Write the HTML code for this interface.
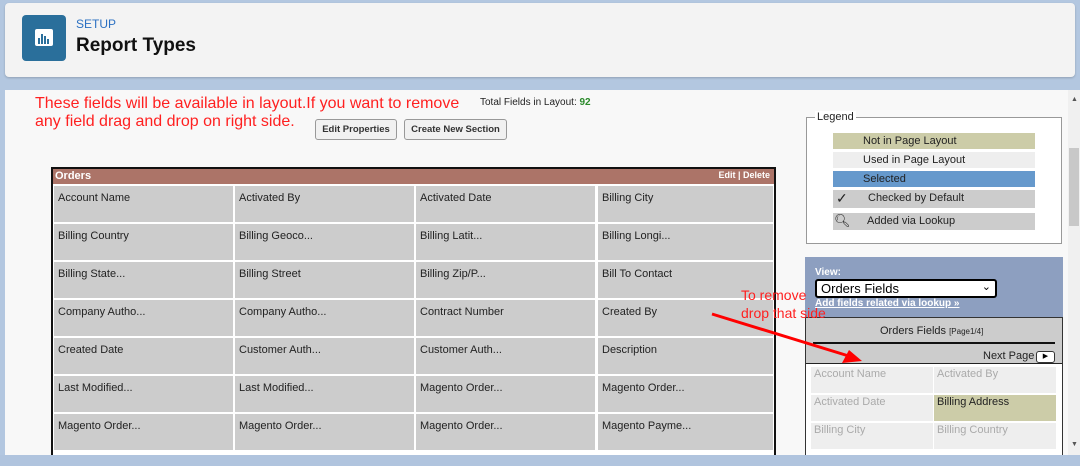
<!DOCTYPE html>
<html style="width:1080px;height:466px;overflow:hidden"><head><meta charset="utf-8"><style>
*{margin:0;padding:0;box-sizing:border-box}
body{width:1080px;height:466px;overflow:hidden;background:#b3c7e0;font-family:"Liberation Sans",Arial,sans-serif;position:relative}
.a{position:absolute}
.hdr{left:5px;top:3px;width:1070px;height:74px;background:#f3f3f3;border-radius:4px;box-shadow:0 1px 2px rgba(0,0,0,.2)}
.main{left:5px;top:90px;width:1075px;height:366px;background:#f8f8f8}
.cell{position:absolute;background:#cccccc;font-size:11px;color:#222;padding:6px 0 0 4px;height:36px}
.btn{position:absolute;top:119px;height:21px;border:1px solid #999;border-radius:3px;background:#f1f1f1;font-size:9.5px;font-weight:bold;color:#333;padding:4px 0 0;text-align:center;white-space:nowrap}
.lg{position:absolute;left:833px;width:202px;height:16px;font-size:11px;color:#222;padding:2px 0 0 30px}
.rc{position:absolute;background:#eeeeee;font-size:11px;color:#aaa;padding:1px 0 0 3px;height:26px;width:122px}
</style></head><body>
<div class="a hdr"></div>
<div class="a" style="left:22px;top:15px;width:44px;height:46px;background:#2a6f9b;border-radius:4px"></div>
<div class="a" style="left:35px;top:29px;width:18px;height:17px;background:#fff;border-radius:2px"></div>
<div class="a" style="left:38px;top:38px;width:2px;height:6px;background:#2a6f9b"></div>
<div class="a" style="left:41px;top:34px;width:2px;height:10px;background:#2a6f9b"></div>
<div class="a" style="left:44px;top:36px;width:2px;height:8px;background:#2a6f9b"></div>
<div class="a" style="left:47px;top:39px;width:2px;height:5px;background:#2a6f9b"></div>
<div class="a" style="left:76px;top:17px;font-size:12px;color:#2b70c2">SETUP</div>
<div class="a" style="left:76px;top:35px;font-size:19px;font-weight:bold;color:#111">Report Types</div>
<div class="a main"></div>
<div class="a" style="left:1068px;top:90px;width:12px;height:366px;background:#f0f0f0"></div>
<div class="a" style="left:1069px;top:148px;width:10px;height:78px;background:#c8c8c8"></div>
<div class="a" style="left:1071px;top:96px;font-size:7px;color:#555">▲</div>
<div class="a" style="left:1071px;top:441px;font-size:7px;color:#555">▼</div>
<div class="a" style="left:35px;top:95px;font-size:16px;color:#ff2020;line-height:18px;white-space:nowrap">These fields will be available in layout.If you want to remove<br>any field drag and drop on right side.</div>
<div class="a" style="left:480px;top:97px;font-size:10px;color:#222">Total Fields in Layout: <b style="color:#2a8a2a">92</b></div>
<div class="btn" style="left:315px;width:82px">Edit Properties</div>
<div class="btn" style="left:404px;width:103px">Create New Section</div>
<div class="a" style="left:51px;top:167px;width:725px;height:289px;border:2px solid #111;border-bottom:none;background:#fff;overflow:hidden"></div>
<div class="a" style="left:53px;top:169px;width:721px;height:15px;background:#ac7468;color:#fff;font-size:11px;font-weight:bold;padding:1px 0 0 2px">Orders<span style="position:absolute;right:4px;top:1px;font-size:9px">Edit | Delete</span></div>
<div id="g"></div>
<div class="a" style="left:806px;top:117px;width:256px;height:127px;border:1px solid #999;background:#fff"></div>
<div class="a" style="left:815px;top:111px;font-size:11px;background:#fff;padding:0 2px;color:#222">Legend</div>
<div class="lg" style="top:133px;background:#cccca8">Not in Page Layout</div>
<div class="lg" style="top:152px;background:#eeeeee">Used in Page Layout</div>
<div class="lg" style="top:171px;background:#6699cc">Selected</div>
<div class="lg" style="top:190px;height:18px;background:#cccccc;padding-left:35px">Checked by Default<span style="position:absolute;left:3px;top:0;font-size:14px">✓</span></div>
<div class="lg" style="top:213px;height:17px;background:#cccccc;padding-left:34px">Added via Lookup<span style="position:absolute;left:1px;top:0;font-size:13px">🔍︎</span></div>
<div class="a" style="left:805px;top:257px;width:258px;height:60px;background:#8d9fc0"></div>
<div class="a" style="left:815px;top:267px;font-size:10px;font-weight:bold;color:#fff">View:</div>
<div class="a" style="left:815px;top:279px;width:182px;height:19px;background:#fff;border:2px solid #000;border-radius:3px;font-size:13px;padding:0 0 0 4px">Orders Fields<span style="position:absolute;right:4px;top:-1px;font-size:11px">⌄</span></div>
<div class="a" style="left:815px;top:298px;font-size:10px;font-weight:bold;color:#fff;text-decoration:underline">Add fields related via lookup »</div>
<div class="a" style="left:805px;top:317px;width:258px;height:149px;border:1px solid #333;background:#fff"></div>
<div class="a" style="left:806px;top:318px;width:256px;height:46px;background:#cccccc;border-bottom:1px solid #222"></div>
<div class="a" style="left:880px;top:325px;font-size:11px;color:#222">Orders Fields <span style="font-size:8px">[Page1/4]</span></div>
<div class="a" style="left:813px;top:342px;width:242px;height:2px;background:#111"></div>
<div class="a" style="left:983px;top:350px;font-size:11px;color:#222">Next Page</div>
<div class="a" style="left:1036px;top:351px;width:19px;height:12px;border:1px solid #333;border-radius:3px;background:#fff;font-size:7px;text-align:center;line-height:10px">▶</div>
<div class="rc" style="left:811px;top:367px">Account Name</div>
<div class="rc" style="left:934px;top:367px">Activated By</div>
<div class="rc" style="left:811px;top:395px">Activated Date</div>
<div class="rc" style="left:934px;top:395px;background:#cccca8;color:#222">Billing Address</div>
<div class="rc" style="left:811px;top:423px">Billing City</div>
<div class="rc" style="left:934px;top:423px">Billing Country</div>
<div class="a" style="left:741px;top:286px;font-size:14px;color:#ff2020;line-height:18px">To remove<br>drop that side</div>
<svg class="a" style="left:0;top:0" width="1080" height="466"><line x1="712" y1="314" x2="852" y2="357" stroke="#f00" stroke-width="3"/><polygon points="862,361 842,363 849,350" fill="#f00"/></svg>
<div class="a" style="left:0;top:455px;width:1080px;height:11px;background:#b0c4de"></div>
<script>
var n=[["Account Name","Activated By","Activated Date","Billing City"],["Billing Country","Billing Geoco...","Billing Latit...","Billing Longi..."],["Billing State...","Billing Street","Billing Zip/P...","Bill To Contact"],["Company Autho...","Company Autho...","Contract Number","Created By"],["Created Date","Customer Auth...","Customer Auth...","Description"],["Last Modified...","Last Modified...","Magento Order...","Magento Order..."],["Magento Order...","Magento Order...","Magento Order...","Magento Payme..."]];
var x=[54,235,416,598],w=[179,179,179,175],h="";
n.forEach(function(r,i){r.forEach(function(t,j){h+='<div class="cell" style="left:'+x[j]+'px;top:'+(186+i*38)+'px;width:'+w[j]+'px">'+t+'</div>';});});
document.getElementById("g").innerHTML=h;
</script>
</body></html>
